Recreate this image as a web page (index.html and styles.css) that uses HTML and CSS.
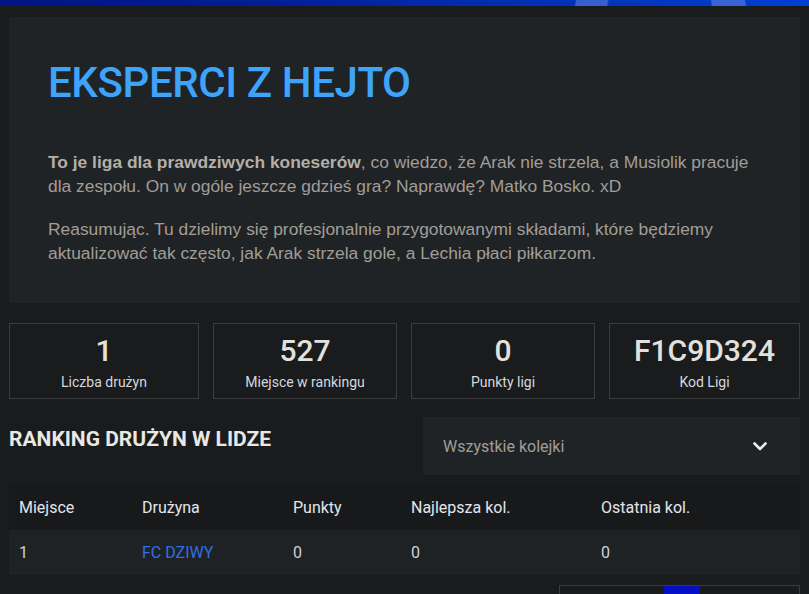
FILE: index.html
```html
<!DOCTYPE html>
<html lang="pl">
<head>
<meta charset="utf-8">
<title>Eksperci z Hejto</title>
<link rel="stylesheet" href="styles.css">
</head>
<body>
<div class="topbar"></div>
<main class="page">
  <section class="hero">
    <h1 class="hero-title">EKSPERCI Z HEJTO</h1>
    <p class="hero-text"><strong>To je liga dla prawdziwych koneserów</strong>, co wiedzo, że Arak nie strzela, a Musiolik pracuje dla zespołu. On w ogóle jeszcze gdzieś gra? Naprawdę? Matko Bosko. xD</p>
    <p class="hero-text">Reasumując. Tu dzielimy się profesjonalnie przygotowanymi składami, które będziemy aktualizować tak często, jak Arak strzela gole, a Lechia płaci piłkarzom.</p>
  </section>

  <section class="stats">
    <div class="stat"><div class="stat-value">1</div><div class="stat-label">Liczba drużyn</div></div>
    <div class="stat"><div class="stat-value">527</div><div class="stat-label">Miejsce w rankingu</div></div>
    <div class="stat"><div class="stat-value">0</div><div class="stat-label">Punkty ligi</div></div>
    <div class="stat"><div class="stat-value">F1C9D324</div><div class="stat-label">Kod Ligi</div></div>
  </section>

  <section class="ranking-head">
    <h2 class="ranking-title">RANKING DRUŻYN W LIDZE</h2>
    <div class="select">
      <span class="select-text">Wszystkie kolejki</span>
      <svg class="chevron" width="14" height="9" viewBox="0 0 14 9"><polyline points="1.5,1.5 7,7 12.5,1.5" fill="none" stroke="#eceae6" stroke-width="2.6" stroke-linecap="round" stroke-linejoin="round"/></svg>
    </div>
  </section>

  <table class="ranking">
    <thead>
      <tr><th class="c1">Miejsce</th><th class="c2">Drużyna</th><th class="c3">Punkty</th><th class="c4">Najlepsza kol.</th><th class="c5">Ostatnia kol.</th></tr>
    </thead>
    <tbody>
      <tr><td>1</td><td><a class="team" href="#">FC DZIWY</a></td><td>0</td><td>0</td><td>0</td></tr>
    </tbody>
  </table>

  <div class="pager-row">
    <div class="pager"><span class="pg active"></span></div>
  </div>
</main>
</body>
</html>
```

FILE: styles.css
```css
* { box-sizing: border-box; }
html, body { margin: 0; padding: 0; }
body {
  background: #1a1b1d;
  font-family: Roboto, "Liberation Sans", sans-serif;
  color: #e2e0dc;
  overflow: hidden;
}
.topbar {
  height: 6px;
  background:
    linear-gradient(100deg, transparent 0%, transparent 71%, rgba(120,150,230,0.45) 71.2%, rgba(120,150,230,0.45) 75%, transparent 75.2%),
    linear-gradient(80deg, transparent 0%, transparent 87.8%, rgba(120,150,230,0.45) 88%, rgba(120,150,230,0.45) 92%, transparent 92.2%),
    linear-gradient(90deg, #001484 0%, #001f98 35%, #0030b4 65%, #003fd2 100%);
}
.page {
  padding: 11px 9px 0 9px;
}
.hero {
  background: #202325;
  padding: 42px 39px 38px 39px;
}
.hero-title {
  margin: 0 0 44px 0;
  color: #3ea4fb;
  font-family: Roboto, sans-serif;
  font-weight: 500;
  font-size: 42px;
  line-height: 48px;
  letter-spacing: -0.4px;
}
.hero-text {
  margin: 0 0 20px 0;
  font-family: "Liberation Sans", Arial, sans-serif;
  font-size: 17.4px;
  line-height: 23.5px;
  color: #a29d97;
}
.hero-text:last-child { margin-bottom: 0; }
.hero-text strong { color: #b4afa9; }

.stats {
  margin-top: 20px;
  display: grid;
  grid-template-columns: 190fr 184fr 184fr 191fr;
  gap: 14px;
}
.stat {
  border: 1px solid #3b3c3e;
  height: 76px;
  display: flex;
  flex-direction: column;
  align-items: center;
  padding-top: 12px;
}
.stat-value {
  font-weight: 500;
  font-size: 30px;
  line-height: 30px;
  color: #e3e1dd;
}
.stat-label {
  margin-top: 8px;
  font-size: 14px;
  line-height: 16px;
  color: #d4d8de;
}

.ranking-head {
  margin-top: 18px;
  display: flex;
  justify-content: space-between;
  align-items: flex-start;
}
.ranking-title {
  margin: 10px 0 0 0;
  font-weight: 700;
  font-size: 21px;
  line-height: 24px;
  color: #eae8e4;
}
.select {
  width: 377px;
  height: 58px;
  background: #202325;
  display: flex;
  align-items: center;
  justify-content: space-between;
  padding: 0 33px 0 20px;
}
.select-text {
  font-size: 16px;
  color: #a29d97;
}
.chevron { display: block; margin-top: 1px; }

.ranking {
  margin-top: 10px;
  width: 100%;
  border-collapse: collapse;
}
.ranking th, .ranking td {
  text-align: left;
  padding: 0 0 0 10px;
  font-size: 16px;
}
.ranking thead tr { background: #18191b; height: 45px; }
.ranking th { font-weight: 400; color: #e2e6ec; }
.ranking tbody tr { background: #1f2224; height: 45px; }
.ranking td { color: #cdd1d6; }
.c1 { width: 123px; }
.c2 { width: 151px; }
.c3 { width: 118px; }
.c4 { width: 190px; }
.team { color: #2f70e4; text-decoration: none; }

.pager-row {
  margin-top: 10px;
  display: flex;
  justify-content: flex-end;
}
.pager {
  width: 241px;
  height: 30px;
  border: 1px solid #3b3c3e;
  display: flex;
  padding-left: 104px;
}
.pg { width: 36px; height: 100%; }
.pg.active { background: #0510c4; }
```
